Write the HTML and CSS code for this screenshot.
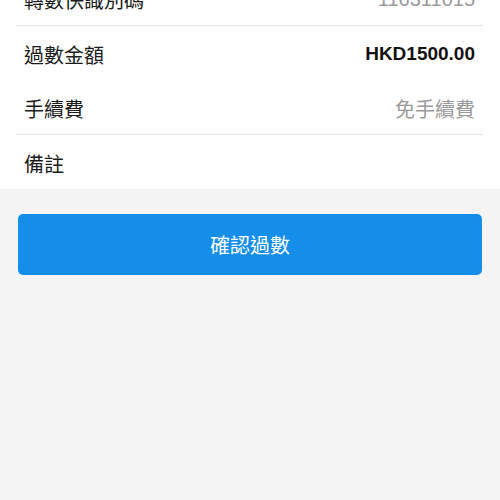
FILE: index.html
```html
<!DOCTYPE html>
<html lang="zh-Hant">
<head>
<meta charset="utf-8">
<link rel="stylesheet" href="styles.css">
</head>
<body>
<div class="page">
  <div class="card">
    <div class="row sep"><span class="label">轉數快識別碼</span><span class="value muted">116311015</span></div>
    <div class="row"><span class="label">過數金額</span><span class="value strong">HKD1500.00</span></div>
    <div class="row sep"><span class="label">手續費</span><span class="value muted">免手續費</span></div>
    <div class="row"><span class="label">備註</span><span class="value"></span></div>
  </div>
  <div class="actions">
    <button class="btn">確認過數</button>
  </div>
</div>
</body>
</html>
```

FILE: styles.css
```css
html, body {
  margin: 0;
  padding: 0;
  background: #f4f4f5;
  height: 100%;
  overflow: hidden;
}
body {
  font-family: "Liberation Sans", "Noto Sans CJK TC", sans-serif;
  color: #1b1b1b;
}
.page {
  margin-top: -29px;
}
.card {
  background: #ffffff;
  display: flex;
  flex-direction: column;
}
.row {
  height: 54.5px;
  box-sizing: border-box;
  display: flex;
  align-items: center;
  justify-content: space-between;
  padding: 3px 25px 0 24px;
  position: relative;
  font-size: 20px;
}
.row.sep::after {
  content: "";
  position: absolute;
  left: 16px;
  right: 17px;
  bottom: 0;
  height: 1px;
  background: #e4e4e6;
}
.label {
  color: #1b1b1b;
}
.value.muted {
  color: #9a9a9a;
}
.value.strong {
  font-weight: bold;
  font-size: 19px;
  color: #111111;
}
.actions {
  padding: 25px 18px 0 18px;
}
.btn {
  display: block;
  width: 100%;
  height: 61px;
  border: none;
  border-radius: 5px;
  background: #148ee9;
  color: #ffffff;
  font-family: "Liberation Sans", "Noto Sans CJK TC", sans-serif;
  font-size: 20px;
  padding: 0;
}
```
